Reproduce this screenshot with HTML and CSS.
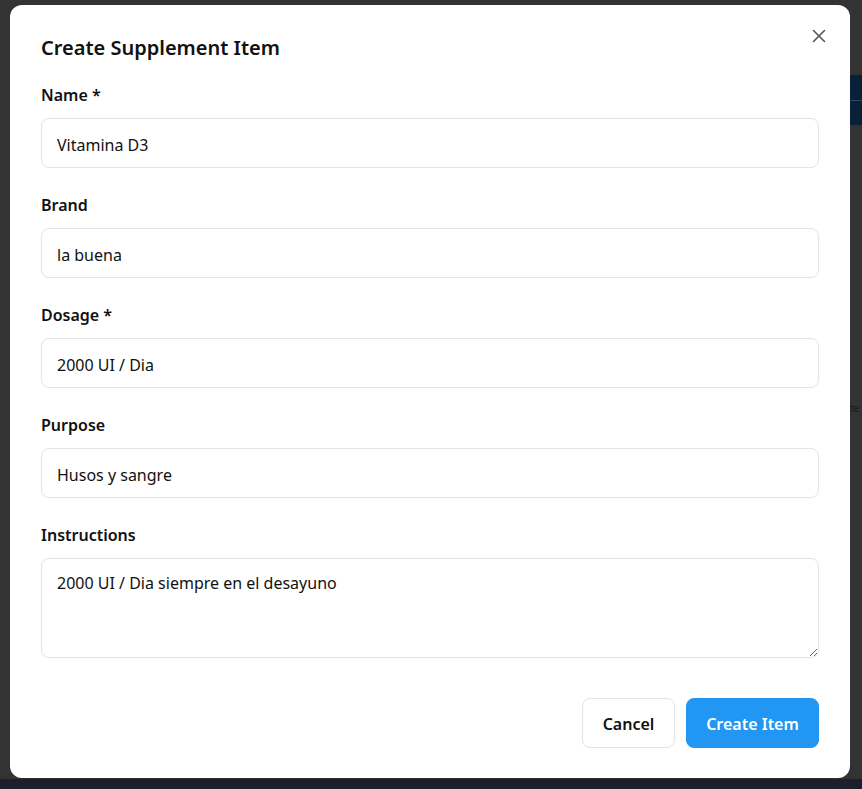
FILE: index.html
```html
<!DOCTYPE html>
<html lang="en">
<head>
<meta charset="utf-8">
<title>Create Supplement Item</title>
<link rel="stylesheet" href="styles.css">
</head>
<body>
<div class="app">
  <div class="app-main">
    <div class="app-side">
      <div class="side-bar"><span class="side-bar-line"></span></div>
      <div class="side-text">te</div>
    </div>
  </div>
  <div class="app-bottom"></div>
</div>

<div class="overlay">
  <div class="modal" role="dialog" aria-labelledby="modal-title">
    <div class="modal-header">
      <h2 id="modal-title" class="modal-title">Create Supplement Item</h2>
      <button class="close-btn" aria-label="Close">
        <svg width="14" height="14" viewBox="0 0 14 14"><path d="M1.5 1.5 L12.5 12.5 M12.5 1.5 L1.5 12.5" stroke="#555" stroke-width="1.6" stroke-linecap="round" fill="none"/></svg>
      </button>
    </div>
    <form class="form">
      <div class="field">
        <label class="label">Name *</label>
        <input class="input" type="text" value="Vitamina D3">
      </div>
      <div class="field">
        <label class="label">Brand</label>
        <input class="input" type="text" value="la buena">
      </div>
      <div class="field">
        <label class="label">Dosage *</label>
        <input class="input" type="text" value="2000 UI / Dia">
      </div>
      <div class="field">
        <label class="label">Purpose</label>
        <input class="input" type="text" value="Husos y sangre">
      </div>
      <div class="field">
        <label class="label">Instructions</label>
        <textarea class="input textarea">2000 UI / Dia siempre en el desayuno</textarea>
      </div>
      <div class="actions">
        <button type="button" class="btn btn-cancel">Cancel</button>
        <button type="button" class="btn btn-primary">Create Item</button>
      </div>
    </form>
  </div>
</div>
</body>
</html>
```

FILE: styles.css
```css
* { box-sizing: border-box; }
html, body { margin: 0; padding: 0; }
body {
  width: 862px;
  height: 789px;
  overflow: hidden;
  background: #333333;
  font-family: "Noto Sans", "Open Sans", sans-serif;
  color: #111;
}
.app {
  display: flex;
  flex-direction: column;
  height: 789px;
}
.app-main {
  flex: 1;
  display: flex;
  justify-content: flex-end;
}
.app-side {
  width: 12px;
  display: flex;
  flex-direction: column;
}
.side-bar {
  margin-top: 75px;
  height: 50px;
  background: #0a2039;
  display: flex;
  align-items: center;
}
.side-bar-line {
  display: block;
  width: 12px;
  height: 1px;
  background: #33475c;
}
.side-text {
  margin-top: 272px;
  font-size: 11px;
  line-height: 22px;
  letter-spacing: -1px;
  color: #1a1a1a;
  white-space: nowrap;
}
.app-bottom {
  height: 10px;
  background: #1c1f2b;
}
.overlay {
  position: fixed;
  inset: 0;
  padding: 5px 12px 11px 10px;
}
.modal {
  width: 840px;
  height: 773px;
  background: #fff;
  border-radius: 12px;
  padding: 29px 31px 30px;
  display: flex;
  flex-direction: column;
}
.modal-header {
  display: flex;
  justify-content: space-between;
  align-items: flex-start;
  margin-bottom: 21px;
}
.modal-title {
  margin: 0;
  font-size: 20px;
  line-height: 28px;
  font-weight: 600;
  color: #111;
}
.close-btn {
  border: 0;
  background: none;
  padding: 0;
  margin: -5px -7px 0 0;
  width: 14px;
  height: 14px;
  display: flex;
  cursor: pointer;
}
.form {
  display: flex;
  flex-direction: column;
  gap: 25px;
}
.field {
  display: flex;
  flex-direction: column;
  gap: 11px;
}
.label {
  font-size: 16px;
  line-height: 24px;
  font-weight: 600;
  color: #111;
}
.input {
  width: 100%;
  height: 50px;
  border: 1px solid #e4e4e4;
  border-radius: 8px;
  padding: 3px 15px 0;
  font-family: inherit;
  font-size: 16px;
  color: #111;
  background: #fff;
  outline: none;
}
.textarea {
  height: 100px;
  padding: 12px 15px;
  line-height: 24px;
  resize: vertical;
}
.actions {
  margin-top: 15px;
  display: flex;
  justify-content: flex-end;
  gap: 11px;
}
.btn {
  height: 50px;
  border-radius: 8px;
  font-family: inherit;
  font-size: 16px;
  font-weight: 600;
  padding: 2px 0 0;
  white-space: nowrap;
  cursor: pointer;
}
.btn-cancel {
  width: 93px;
  background: #fff;
  border: 1px solid #e4e4e4;
  color: #111;
}
.btn-primary {
  width: 133px;
  background: #2196f3;
  border: 1px solid #2196f3;
  color: #fff;
}
```
